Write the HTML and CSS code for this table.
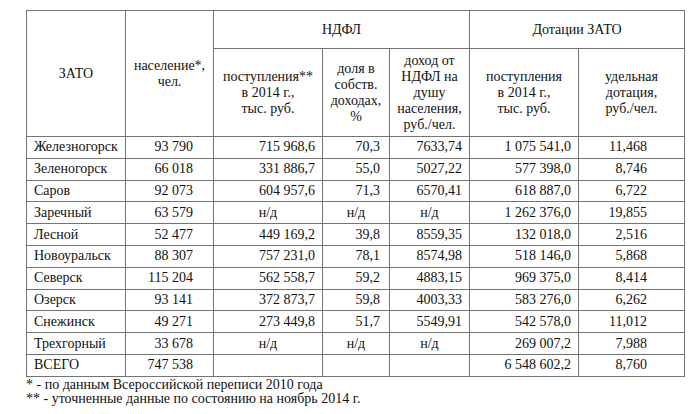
FILE: index.html
```html
<!DOCTYPE html>
<html lang="ru">
<head>
<meta charset="utf-8">
<link rel="stylesheet" href="styles.css">
</head>
<body>
<div class="page">
<table class="data">
<colgroup>
<col class="c1"><col class="c2"><col class="c3"><col class="c4"><col class="c5"><col class="c6"><col class="c7">
</colgroup>
<thead>
<tr class="h1">
<th rowspan="2">ЗАТО</th>
<th rowspan="2">население*,<br>чел.</th>
<th colspan="3">НДФЛ</th>
<th colspan="2">Дотации ЗАТО</th>
</tr>
<tr class="h2">
<th>поступления**<br>в 2014 г.,<br>тыс. руб.</th>
<th>доля в<br>собств.<br>доходах,<br>%</th>
<th>доход от<br>НДФЛ на<br>душу<br>населения,<br>руб./чел.</th>
<th>поступления<br>в 2014 г.,<br>тыс. руб.</th>
<th>удельная<br>дотация,<br>руб./чел.</th>
</tr>
</thead>
<tbody>
<tr><td class="name">Железногорск</td><td class="pop">93 790</td><td class="num">715 968,6</td><td class="num sh">70,3</td><td class="num">7633,74</td><td class="num">1 075 541,0</td><td class="spec">11,468</td></tr>
<tr><td class="name">Зеленогорск</td><td class="pop">66 018</td><td class="num">331 886,7</td><td class="num sh">55,0</td><td class="num">5027,22</td><td class="num">577 398,0</td><td class="spec">8,746</td></tr>
<tr><td class="name">Саров</td><td class="pop">92 073</td><td class="num">604 957,6</td><td class="num sh">71,3</td><td class="num">6570,41</td><td class="num">618 887,0</td><td class="spec">6,722</td></tr>
<tr><td class="name">Заречный</td><td class="pop">63 579</td><td class="na">н/д</td><td class="na">н/д</td><td class="na">н/д</td><td class="num">1 262 376,0</td><td class="spec">19,855</td></tr>
<tr><td class="name">Лесной</td><td class="pop">52 477</td><td class="num">449 169,2</td><td class="num sh">39,8</td><td class="num">8559,35</td><td class="num">132 018,0</td><td class="spec">2,516</td></tr>
<tr><td class="name">Новоуральск</td><td class="pop">88 307</td><td class="num">757 231,0</td><td class="num sh">78,1</td><td class="num">8574,98</td><td class="num">518 146,0</td><td class="spec">5,868</td></tr>
<tr><td class="name">Северск</td><td class="pop">115 204</td><td class="num">562 558,7</td><td class="num sh">59,2</td><td class="num">4883,15</td><td class="num">969 375,0</td><td class="spec">8,414</td></tr>
<tr><td class="name">Озерск</td><td class="pop">93 141</td><td class="num">372 873,7</td><td class="num sh">59,8</td><td class="num">4003,33</td><td class="num">583 276,0</td><td class="spec">6,262</td></tr>
<tr><td class="name">Снежинск</td><td class="pop">49 271</td><td class="num">273 449,8</td><td class="num sh">51,7</td><td class="num">5549,91</td><td class="num">542 578,0</td><td class="spec">11,012</td></tr>
<tr><td class="name">Трехгорный</td><td class="pop">33 678</td><td class="na">н/д</td><td class="na">н/д</td><td class="na">н/д</td><td class="num">269 007,2</td><td class="spec">7,988</td></tr>
<tr><td class="name">ВСЕГО</td><td class="pop">747 538</td><td></td><td></td><td></td><td class="num">6 548 602,2</td><td class="spec">8,760</td></tr>
</tbody>
</table>
<div class="notes">
<p class="note">* - по данным Всероссийской переписи 2010 года</p>
<p class="note">** - уточненные данные по состоянию на ноябрь 2014 г.</p>
</div>
</div>
</body>
</html>
```
FILE: styles.css
```css
html, body {
  margin: 0;
  padding: 0;
  background: #ffffff;
}
body {
  font-family: "Liberation Serif", "Times New Roman", serif;
  font-size: 14px;
  color: #111111;
}
.page {
  padding: 10px 0 0 26px;
}
.data {
  border-collapse: collapse;
  table-layout: fixed;
  width: 658px;
}
.c1 { width: 99px; }
.c2 { width: 88px; }
.c3 { width: 109px; }
.c4 { width: 67px; }
.c5 { width: 80px; }
.c6 { width: 109px; }
.c7 { width: 106px; }
.data th,
.data td {
  border: 1px solid #737373;
  padding: 0;
  font-weight: normal;
}
.data th {
  text-align: center;
  vertical-align: middle;
  line-height: 16px;
}
.h1 th { height: 37px; }
.h2 th { height: 87px; }
.data td {
  height: 20.8px;
  line-height: 16px;
  vertical-align: middle;
  white-space: nowrap;
}
.name {
  text-align: left;
  padding-left: 7px !important;
}
.pop {
  text-align: right;
  padding-right: 20px !important;
}
.num {
  text-align: right;
  padding-right: 7px !important;
}
.sh {
  padding-right: 9px !important;
}
.na {
  text-align: center;
}
.spec {
  text-align: right;
  padding-right: 37px !important;
}
.notes {
  padding-top: 1px;
}
.note {
  margin: 0;
  line-height: 14px;
}
```
